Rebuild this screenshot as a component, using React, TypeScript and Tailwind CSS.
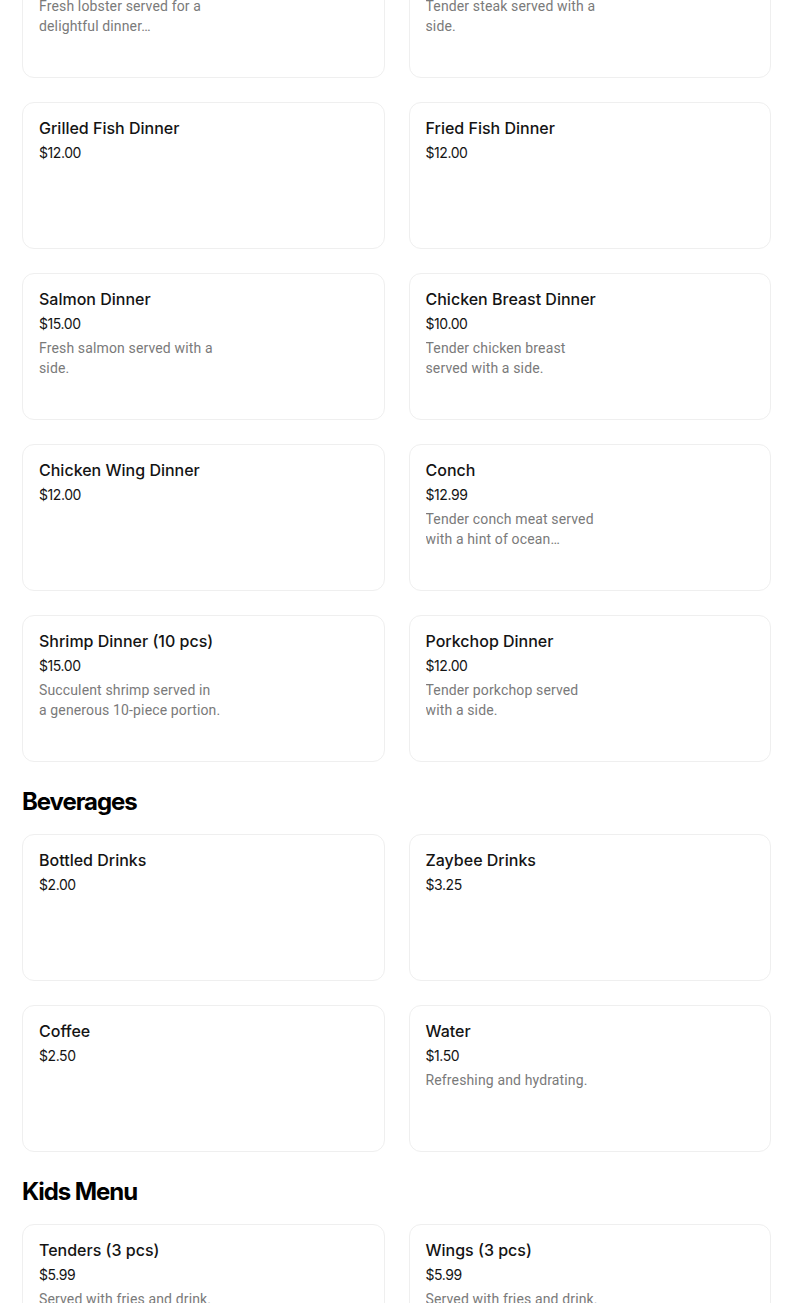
import React from 'react';

interface Item {
  name: string;
  price: string;
  description?: string;
}

interface Section {
  title?: string;
  items: Item[];
}

const sections: Section[] = [
  {
    items: [
      { name: 'Lobster Dinner', price: '$25.00', description: 'Fresh lobster served for a delightful dinner…' },
      { name: 'Steak Dinner', price: '$18.00', description: 'Tender steak served with a side.' },
      { name: 'Grilled Fish Dinner', price: '$12.00' },
      { name: 'Fried Fish Dinner', price: '$12.00' },
      { name: 'Salmon Dinner', price: '$15.00', description: 'Fresh salmon served with a side.' },
      { name: 'Chicken Breast Dinner', price: '$10.00', description: 'Tender chicken breast served with a side.' },
      { name: 'Chicken Wing Dinner', price: '$12.00' },
      { name: 'Conch', price: '$12.99', description: 'Tender conch meat served with a hint of ocean freshness and a side.' },
      { name: 'Shrimp Dinner (10 pcs)', price: '$15.00', description: 'Succulent shrimp served in a\u00a0generous 10-piece portion.' },
      { name: 'Porkchop Dinner', price: '$12.00', description: 'Tender porkchop served with\u00a0a side.' },
    ],
  },
  {
    title: 'Beverages',
    items: [
      { name: 'Bottled Drinks', price: '$2.00' },
      { name: 'Zaybee Drinks', price: '$3.25' },
      { name: 'Coffee', price: '$2.50' },
      { name: 'Water', price: '$1.50', description: 'Refreshing and hydrating.' },
    ],
  },
  {
    title: 'Kids Menu',
    items: [
      { name: 'Tenders (3 pcs)', price: '$5.99', description: 'Served with fries and drink.' },
      { name: 'Wings (3 pcs)', price: '$5.99', description: 'Served with fries and drink.' },
    ],
  },
];

const MenuCard: React.FC<{ item: Item }> = ({ item }) => (
  <div className="h-[147px] rounded-xl border border-[#efefef] bg-white px-4 pt-4">
    <h3 className="-mt-px text-base font-medium leading-5 text-[#141414]">{item.name}</h3>
    <p className="mt-[5px] text-sm leading-5 tracking-[-0.03em] text-[#141414]">{item.price}</p>
    {item.description && (
      <p className="mt-1 line-clamp-2 max-w-[184px] font-['Roboto','Liberation_Sans',sans-serif] text-sm leading-5 tracking-[0.01em] text-[#7a7a7a]">
        {item.description}
      </p>
    )}
  </div>
);

export default function App() {
  return (
    <div className="min-h-screen overflow-hidden bg-white font-['Inter','Liberation_Sans',sans-serif]">
      <div className="-mt-[69px] pl-[22px] pr-[33px]">
        {sections.map((section, i) => (
          <div key={i}>
            {section.title && (
              <h2 className="mt-6 mb-4 text-2xl leading-8 font-bold tracking-[-0.045em] text-black">
                {section.title}
              </h2>
            )}
            <div className="grid grid-cols-2 gap-6">
              {section.items.map((item) => (
                <MenuCard key={item.name} item={item} />
              ))}
            </div>
          </div>
        ))}
        <div className="h-10" />
      </div>
    </div>
  );
}
